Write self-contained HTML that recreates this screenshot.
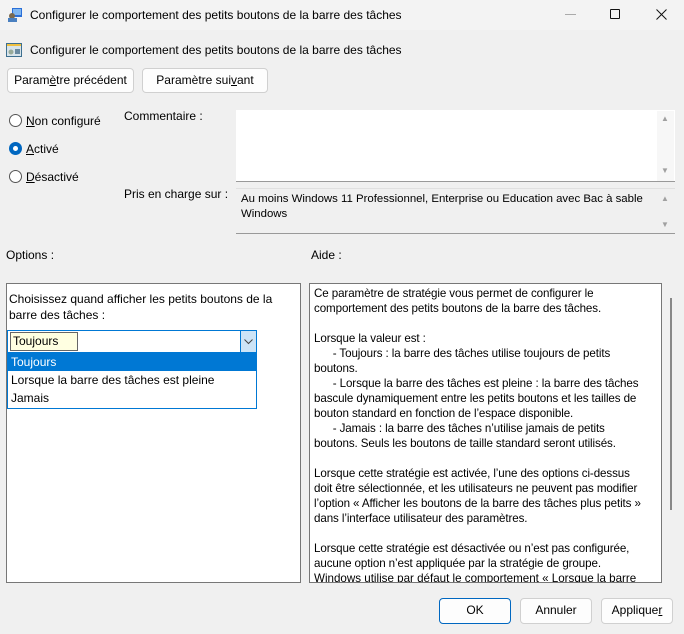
<!DOCTYPE html>
<html><head><meta charset="utf-8"><style>
*{box-sizing:border-box;margin:0;padding:0}
body{width:684px;height:634px;background:#f0f0f0;font-family:"Liberation Sans",sans-serif;font-size:12px;color:#000;position:relative;overflow:hidden}
.a{position:absolute;white-space:nowrap}
.btn{position:absolute;background:#fdfdfd;border:1px solid #d0d0d0;border-radius:4px;text-align:center;line-height:23px;font-size:12px}
.rad{position:absolute;width:13px;height:13px;border:1px solid #555;border-radius:50%;background:#fff}
.sb{position:absolute;color:#a0a0a0;font-size:8px}
</style></head><body>
<div class="a" style="left:0;top:0;width:684px;height:30px;background:#f3f3f3"></div>
<svg class="a" style="left:7px;top:7px" width="16" height="16"><rect x="5" y="1" width="10" height="9" fill="#2a6fd8"/><rect x="6" y="2" width="8" height="6" fill="#7fb6f0"/><circle cx="5" cy="9" r="3" fill="#7a6a50"/><rect x="1" y="11" width="9" height="4" fill="#4a80c0"/></svg>
<div class="a" style="left:30px;top:8px">Configurer le comportement des petits boutons de la barre des tâches</div>
<div class="a" style="left:565px;top:14px;width:11px;height:1px;background:#aaa"></div>
<div class="a" style="left:610px;top:9px;width:10px;height:10px;border:1px solid #111;border-radius:1px"></div>
<svg class="a" style="left:656px;top:9px" width="11" height="11"><path d="M0.5 0.5L10.5 10.5M10.5 0.5L0.5 10.5" stroke="#111" stroke-width="1"/></svg>
<svg class="a" style="left:6px;top:42px" width="16" height="16"><rect x="0" y="1" width="16" height="14" fill="#3d6f8f"/><rect x="1" y="4" width="14" height="10" fill="#d8e4ea"/><rect x="1" y="2" width="14" height="2" fill="#f0c040"/><circle cx="5" cy="10" r="2.5" fill="#9a9" /><rect x="9" y="7" width="5" height="5" fill="#6a8aa0"/></svg>
<div class="a" style="left:30px;top:43px">Configurer le comportement des petits boutons de la barre des tâches</div>
<div class="btn" style="left:7px;top:68px;width:127px;height:25px">Param<u>è</u>tre précédent</div>
<div class="btn" style="left:142px;top:68px;width:126px;height:25px">Paramètre sui<u>v</u>ant</div>
<div class="rad" style="left:9px;top:114px"></div><div class="a" style="left:26px;top:114px"><u>N</u>on configuré</div>
<div class="rad" style="left:9px;top:142px;border-color:#0067c0;background:#0067c0"><div style="position:absolute;left:3px;top:3px;width:5px;height:5px;border-radius:50%;background:#fff"></div></div><div class="a" style="left:26px;top:142px"><u>A</u>ctivé</div>
<div class="rad" style="left:9px;top:170px"></div><div class="a" style="left:26px;top:170px"><u>D</u>ésactivé</div>
<div class="a" style="left:124px;top:109px">Commentaire :</div>
<div class="a" style="left:124px;top:187px">Pris en charge sur :</div>
<div class="a" style="left:236px;top:110px;width:439px;height:72px;background:#fff;border-bottom:1px solid #999"></div>
<div class="a" style="left:657px;top:111px;width:17px;height:70px;background:#f7f7f7"></div>
<div class="sb" style="left:661px;top:114px">▲</div><div class="sb" style="left:661px;top:166px">▼</div>
<div class="a" style="left:236px;top:188px;width:439px;height:46px;border-bottom:1px solid #999;border-top:1px solid #e0e0e0"></div>
<div class="a" style="left:241px;top:192px;line-height:15px;font-size:11.4px;white-space:nowrap;width:235px;overflow:visible">Au moins Windows 11 Professionnel, Enterprise ou Education avec Bac à sable<br>Windows</div>
<div class="sb" style="left:661px;top:194px">▲</div><div class="sb" style="left:661px;top:220px">▼</div>
<div class="a" style="left:6px;top:248px">Options :</div>
<div class="a" style="left:311px;top:248px">Aide :</div>
<div class="a" style="left:6px;top:283px;width:295px;height:300px;background:#fff;border:1px solid #777"></div>
<div class="a" style="left:9px;top:291px;line-height:16px">Choisissez quand afficher les petits boutons de la<br>barre des tâches :</div>
<div class="a" style="left:7px;top:330px;width:250px;height:23px;background:#fff;border:1px solid #0078d4"></div>
<div class="a" style="left:10px;top:332px;width:68px;height:19px;background:#ffffe1;border:1px solid #666;line-height:17px;padding-left:2px">Toujours</div>
<div class="a" style="left:240px;top:331px;width:16px;height:21px;background:#cce4f7;border-left:1px solid #0078d4"></div>
<svg class="a" style="left:244px;top:339px" width="9" height="6"><path d="M0.5 0.5L4.5 4.5L8.5 0.5" stroke="#444" fill="none"/></svg>
<div class="a" style="left:7px;top:352px;width:250px;height:57px;background:#fff;border:1px solid #0078d4"></div>
<div class="a" style="left:8px;top:353px;width:248px;height:18px;background:#0078d4"></div>
<div class="a" style="left:11px;top:355px;color:#fff">Toujours</div>
<div class="a" style="left:11px;top:373px">Lorsque la barre des tâches est pleine</div>
<div class="a" style="left:11px;top:391px">Jamais</div>
<div class="a" style="left:309px;top:283px;width:353px;height:300px;background:#fff;border:1px solid #777;overflow:hidden"></div>
<div class="a" style="left:314px;top:286px;line-height:15px;font-size:11.6px;letter-spacing:-0.1px">Ce paramètre de stratégie vous permet de configurer le<br>comportement des petits boutons de la barre des tâches.<br><br>Lorsque la valeur est :<br>&nbsp;&nbsp;&nbsp;&nbsp;&nbsp;&nbsp;- Toujours : la barre des tâches utilise toujours de petits<br>boutons.<br>&nbsp;&nbsp;&nbsp;&nbsp;&nbsp;&nbsp;- Lorsque la barre des tâches est pleine : la barre des tâches<br>bascule dynamiquement entre les petits boutons et les tailles de<br>bouton standard en fonction de l’espace disponible.<br>&nbsp;&nbsp;&nbsp;&nbsp;&nbsp;&nbsp;- Jamais : la barre des tâches n’utilise jamais de petits<br>boutons. Seuls les boutons de taille standard seront utilisés.<br><br>Lorsque cette stratégie est activée, l’une des options ci-dessus<br>doit être sélectionnée, et les utilisateurs ne peuvent pas modifier<br>l’option « Afficher les boutons de la barre des tâches plus petits »<br>dans l’interface utilisateur des paramètres.<br><br>Lorsque cette stratégie est désactivée ou n’est pas configurée,<br>aucune option n’est appliquée par la stratégie de groupe.</div>
<div class="a" style="left:314px;top:571px;height:11px;overflow:hidden;line-height:15px;font-size:11.6px">Windows utilise par défaut le comportement « Lorsque la barre</div>
<div class="a" style="left:670px;top:298px;width:2px;height:212px;background:#888"></div>
<div class="btn" style="left:439px;top:598px;width:72px;height:26px;border:1px solid #0067c0">OK</div>
<div class="btn" style="left:520px;top:598px;width:72px;height:26px">Annuler</div>
<div class="btn" style="left:601px;top:598px;width:72px;height:26px">Applique<u>r</u></div>
</body></html>
